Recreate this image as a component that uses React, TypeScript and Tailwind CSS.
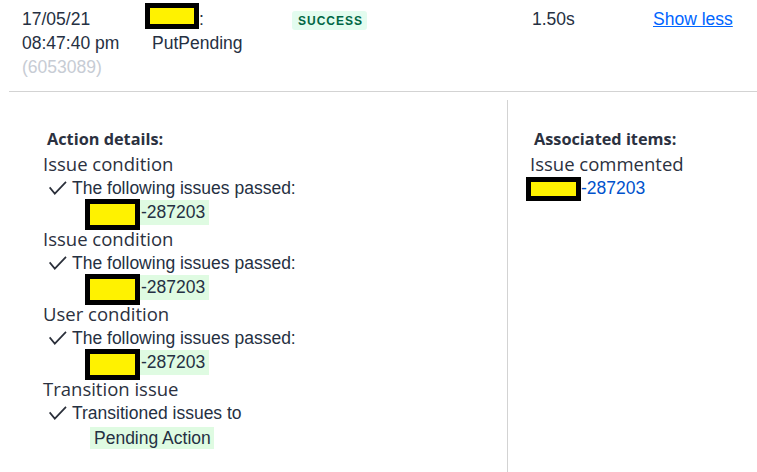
import React from "react";

const Check = () => (
  <svg width="18" height="15" viewBox="0 0 18 15" className="mt-[5px] shrink-0">
    <path d="M0.6 6.4 L5.8 12.6 L17 0.8" fill="none" stroke="#2a2f3a" strokeWidth="1.7" />
  </svg>
);

const KeyRow = () => (
  <div className="flex items-start h-[27px] ml-[42px]">
    <span className="block w-[55px] h-[31px] -mt-[1px] border-[5px] border-black bg-[#fff200] relative z-10" />
    <span className="block h-[25px] leading-[25px] bg-[#dffbe2] pl-[1px] pr-[4px]">-287203</span>
  </div>
);

const Title = ({ children }: { children: React.ReactNode }) => (
  <div className="h-[24px] leading-[24px] font-['Open_Sans',sans-serif] text-[18.5px] text-[#2b3140]">{children}</div>
);

const CheckLine = ({ children }: { children: React.ReactNode }) => (
  <div className="flex items-start h-[24px] leading-[24px] pl-[6px]">
    <Check />
    <span className="ml-[5px]">{children}</span>
  </div>
);

export default function App() {
  return (
    <div className="w-[757px] h-[472px] overflow-hidden bg-white font-['Liberation_Sans',Arial,sans-serif] text-[17.5px] text-[#253042]">
      <div className="flex pt-[7px] leading-[24px]">
        <div className="w-[152px] pl-[22px]">
          <div>17/05/21</div>
          <div>08:47:40 pm</div>
          <div className="text-[#c7ccd4]">(6053089)</div>
        </div>
        <div className="w-[140px]">
          <div className="flex items-start h-[24px] -ml-[7px]">
            <span className="block w-[54px] h-[26px] -mt-[4px] border-[5px] border-black bg-[#fff200]" />
            <span>:</span>
          </div>
          <div>PutPending</div>
        </div>
        <div className="w-[240px]">
          <span className="inline-flex items-center h-[19px] mt-[4px] pl-[6px] pr-[4px] rounded-[3px] bg-[#e3fcef] text-[#006644] text-[12px] font-bold tracking-[1px] leading-none align-top">
            SUCCESS
          </span>
        </div>
        <div className="w-[121px]">1.50s</div>
        <div>
          <a href="#" className="text-[#0065ff] underline">Show less</a>
        </div>
      </div>
      <div className="ml-[9px] mt-[12px] h-px bg-[#d3d3d3]" />
      <div className="flex h-[380px] pt-[8px]">
        <div className="w-[507px] pl-[43px] pt-[27px]">
          <div className="h-[25px] leading-[24px] pl-[4px] font-['Open_Sans',sans-serif] font-bold text-[16.3px] text-[#2b3140]">Action details:</div>
          <Title>Issue condition</Title>
          <CheckLine>The following issues passed:</CheckLine>
          <KeyRow />
          <Title>Issue condition</Title>
          <CheckLine>The following issues passed:</CheckLine>
          <KeyRow />
          <Title>User condition</Title>
          <CheckLine>The following issues passed:</CheckLine>
          <KeyRow />
          <Title>Transition issue</Title>
          <CheckLine>Transitioned issues to</CheckLine>
          <div className="ml-[47px]">
            <span className="inline-block leading-[22px] bg-[#dffbe2] pl-[4px] pr-[3px]">Pending Action</span>
          </div>
        </div>
        <div className="flex-1 border-l border-[#d3d3d3] pl-[22px] pt-[27px]">
          <div className="h-[25px] leading-[24px] pl-[4px] font-['Open_Sans',sans-serif] font-bold text-[16.3px] text-[#2b3140]">Associated items:</div>
          <Title>Issue commented</Title>
          <div className="flex items-start h-[24px] leading-[24px] -ml-[4px]">
            <span className="block w-[55px] h-[24px] mt-[1px] border-[5px] border-black bg-[#fff200]" />
            <a href="#" className="text-[#0052cc]">-287203</a>
          </div>
        </div>
      </div>
    </div>
  );
}
